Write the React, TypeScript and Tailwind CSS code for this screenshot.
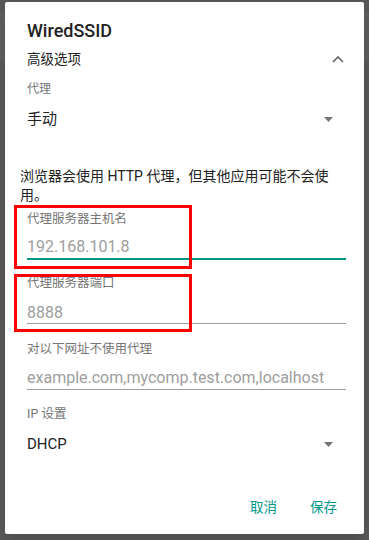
import React from "react";

const font = { fontFamily: "Roboto, 'Noto Sans CJK SC', sans-serif" };

function Caret() {
    return (
        <svg width="9" height="5" viewBox="0 0 9 5" className="shrink-0">
            <path d="M0 0 L9 0 L4.5 5 Z" fill="#757575" />
        </svg>
    );
}

function Field({ label, value, active }: { label: string; value: string; active?: boolean }) {
    return (
        <div className="mr-[18px]">
            <div className="h-[20px] flex items-center text-[12.5px] text-[#757575]">{label}</div>
            <div className="h-[22px] mt-[7px] flex items-center text-[16px] text-[#9e9e9e]">{value}</div>
            {active ? (
                <div className="h-[2px] bg-[#009688]" />
            ) : (
                <div className="h-[1px] bg-[#9e9e9e]" />
            )}
        </div>
    );
}

export default function App() {
    return (
        <div className="relative w-[369px] h-[540px] bg-[#575757] overflow-hidden" style={font}>
            <div className="absolute left-0 top-[13px] w-full h-[49px] bg-[#5c5c5c]" />
            <div className="relative ml-[5px] top-[2px] w-[359px] h-[532px] bg-white rounded-[2px] shadow-lg pl-[22px]">
                {/* title */}
                <div className="pt-[14px] h-[42px] flex items-center text-[18px] font-medium text-[#212121]">
                    WiredSSID
                </div>
                <div className="h-[30px] flex items-center justify-between pr-[20px] text-[13.5px] text-[#212121]">
                    <span>高级选项</span>
                    <svg width="12" height="7" viewBox="0 0 12 7">
                        <path d="M1 6 L6 1 L11 6" fill="none" stroke="#616161" strokeWidth="1.6" />
                    </svg>
                </div>
                <div className="h-[30px] flex items-center text-[12px] text-[#757575]">代理</div>
                <div className="h-[30px] flex items-center justify-between pr-[31px] text-[15px] text-[#212121]">
                    <span>手动</span>
                    <Caret />
                </div>

                <p className="mt-[33px] -ml-[7px] w-[326px] text-[14px] leading-[19px] text-[#212121]">
                    浏览器会使用 HTTP 代理，但其他应用可能不会使用。
                </p>

                <div className="mt-[4px]">
                    <Field label="代理服务器主机名" value="192.168.101.8" active />
                </div>
                <div className="mt-[13px]">
                    <div className="mr-[18px]">
                        <div className="h-[20px] flex items-center text-[12.5px] text-[#757575]">代理服务器端口</div>
                        <div className="h-[21px] mt-[9px] flex items-center text-[16px] text-[#9e9e9e]">8888</div>
                        <div className="h-[1px] bg-[#9e9e9e]" />
                    </div>
                </div>
                <div className="mt-[15px]">
                    <div className="mr-[18px]">
                        <div className="h-[20px] flex items-center text-[12.5px] text-[#757575]">对以下网址不使用代理</div>
                        <div className="h-[23px] mt-[7px] flex items-center text-[16px] text-[#9e9e9e]">
                            example.com,mycomp.test.com,localhost
                        </div>
                        <div className="h-[1px] bg-[#9e9e9e]" />
                    </div>
                </div>

                <div className="mt-[14px] h-[20px] flex items-center text-[12.5px] text-[#757575]">IP 设置</div>
                <div className="mt-[5px] h-[30px] flex items-center justify-between pr-[31px] text-[15px] text-[#212121]">
                    <span>DHCP</span>
                    <Caret />
                </div>

                <div className="mt-[32px] h-[32px] flex items-center justify-end gap-[33px] pr-[27px] text-[13.5px] text-[#009688]">
                    <span>取消</span>
                    <span>保存</span>
                </div>
            </div>

            {/* annotation boxes */}
            <div className="absolute left-[14px] top-[205px] w-[178px] h-[64px] border-[3px] border-[#ff0000]" />
            <div className="absolute left-[14px] top-[274px] w-[178px] h-[58px] border-[3px] border-[#ff0000]" />
        </div>
    );
}
